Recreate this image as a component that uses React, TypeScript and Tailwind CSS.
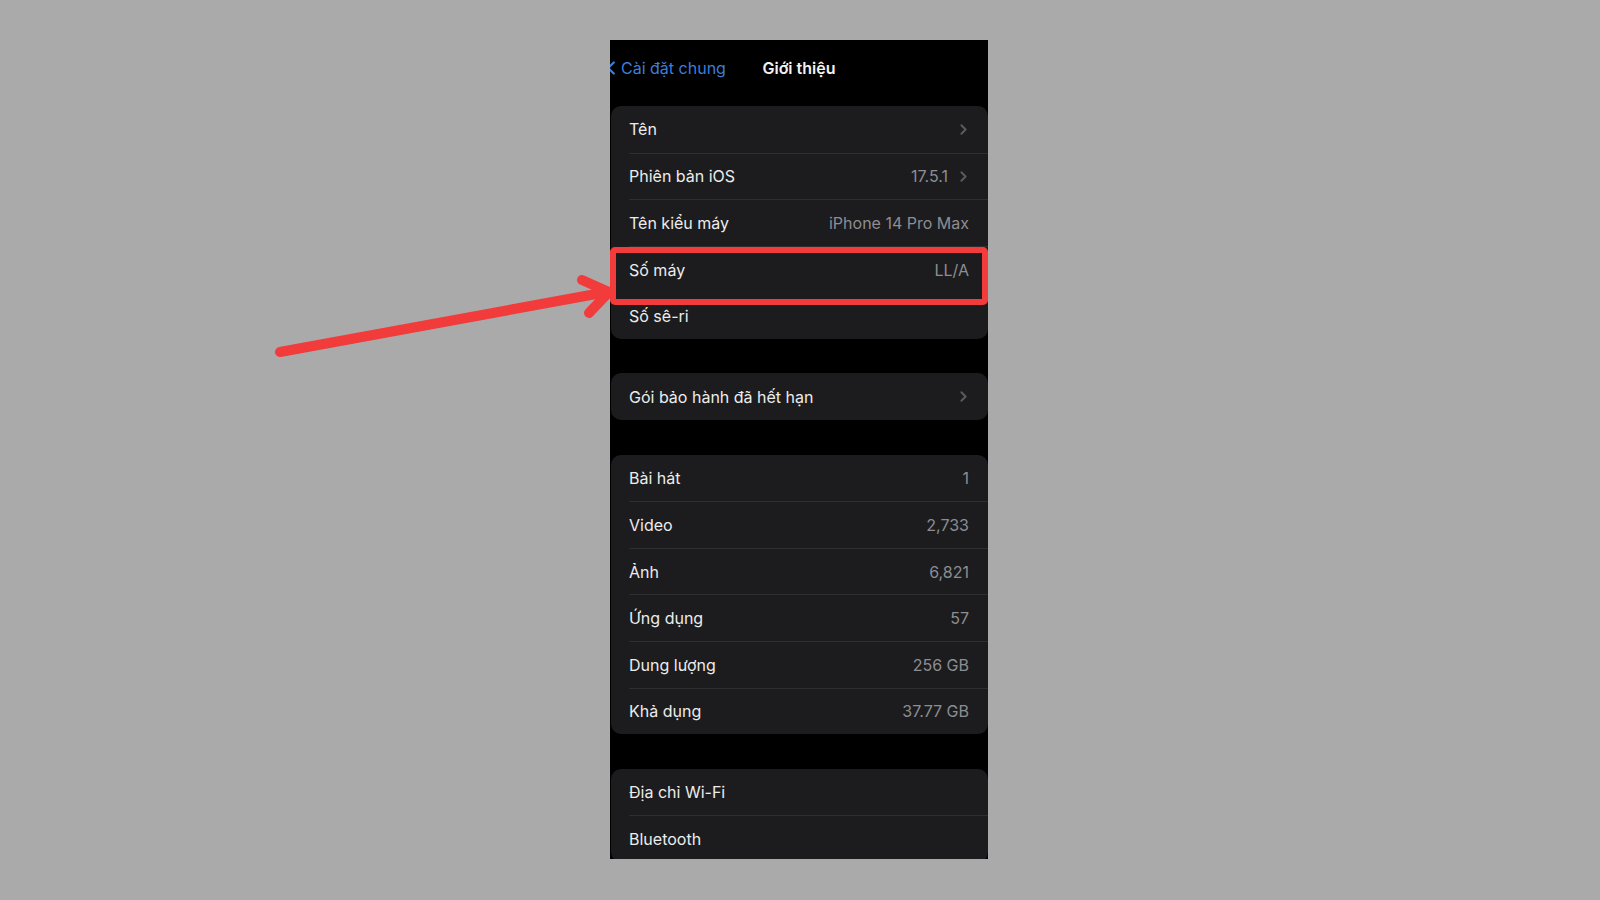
import { ChevronLeft, ChevronRight } from 'lucide-react';

type Row = { label: string; value?: string; chevron?: boolean; highlight?: boolean; noDivider?: boolean };

const groups: Row[][] = [
  [
    { label: 'Tên', chevron: true },
    { label: 'Phiên bản iOS', value: '17.5.1', chevron: true },
    { label: 'Tên kiểu máy', value: 'iPhone 14 Pro Max' },
    { label: 'Số máy', value: 'LL/A', highlight: true },
    { label: 'Số sê-ri', noDivider: true },
  ],
  [{ label: 'Gói bảo hành đã hết hạn', chevron: true }],
  [
    { label: 'Bài hát', value: '1' },
    { label: 'Video', value: '2,733' },
    { label: 'Ảnh', value: '6,821' },
    { label: 'Ứng dụng', value: '57' },
    { label: 'Dung lượng', value: '256 GB' },
    { label: 'Khả dụng', value: '37.77 GB' },
  ],
  [{ label: 'Địa chỉ Wi-Fi' }, { label: 'Bluetooth' }],
];

export default function App() {
  return (
    <div
      className="relative h-[900px] w-[1600px] overflow-hidden bg-[#aaaaaa] pt-[40px]"
      style={{ fontFamily: 'Inter, "Noto Sans", sans-serif' }}
    >
      <div className="ml-[610px] flex h-[819px] w-[378px] flex-col overflow-hidden bg-black">
        <header className="grid h-[66px] shrink-0 grid-cols-[1fr_auto_1fr] items-start pt-[17px]">
          <div className="flex items-center text-[16px] leading-[22px] text-[#3d7ddb]">
            <ChevronLeft className="-ml-[10px] h-[22px] w-[22px] shrink-0" strokeWidth={2.5} />
            <span className="-ml-[1px]">Cài đặt chung</span>
          </div>
          <h1 className="text-[16px] font-semibold leading-[22px] text-[#f2f2f2]">Giới thiệu</h1>
          <div />
        </header>

        <div className="flex flex-col gap-[34.5px] pl-[1px]">
          {groups.map((rows, gi) => (
            <SettingsGroup key={gi} rows={rows} />
          ))}
        </div>
      </div>

      <svg
        className="pointer-events-none absolute left-0 top-0"
        width="1600"
        height="900"
        viewBox="0 0 1600 900"
      >
        <g stroke="#f23b3b" strokeWidth="10" strokeLinecap="round" strokeLinejoin="round" fill="none">
          <line x1="280" y1="352" x2="607" y2="292" />
          <polyline points="582,280 609,292 589,313" />
        </g>
      </svg>
    </div>
  );
}

function SettingsGroup({ rows }: { rows: Row[] }) {
  return (
    <div className="rounded-[10px] bg-[#1c1c1e]">
      {rows.map((row, i) => (
        <div key={row.label} className="relative flex h-[46.6px] flex-col">
          {i > 0 && (
            <div className={row.noDivider ? 'h-px shrink-0' : 'ml-[18px] h-px shrink-0 bg-[#2e2e31]'} />
          )}
          <div className="flex flex-1 items-center justify-between pl-[18px] pr-[19px] text-[16px]">
            <span className="text-[#ececec]">{row.label}</span>
            <span className="flex items-center gap-[7px] text-[#8d8d92]">
              {row.value && <span>{row.value}</span>}
              {row.chevron && (
                <ChevronRight className="-mr-[3px] h-[17px] w-[17px] text-[#5b5b5f]" strokeWidth={2.75} />
              )}
            </span>
          </div>
          {row.highlight && (
            <div className="pointer-events-none absolute -left-[1px] right-0 top-[1px] z-10 h-[58px] rounded-[5px] border-[6px] border-[#f23b3b]" />
          )}
        </div>
      ))}
    </div>
  );
}
